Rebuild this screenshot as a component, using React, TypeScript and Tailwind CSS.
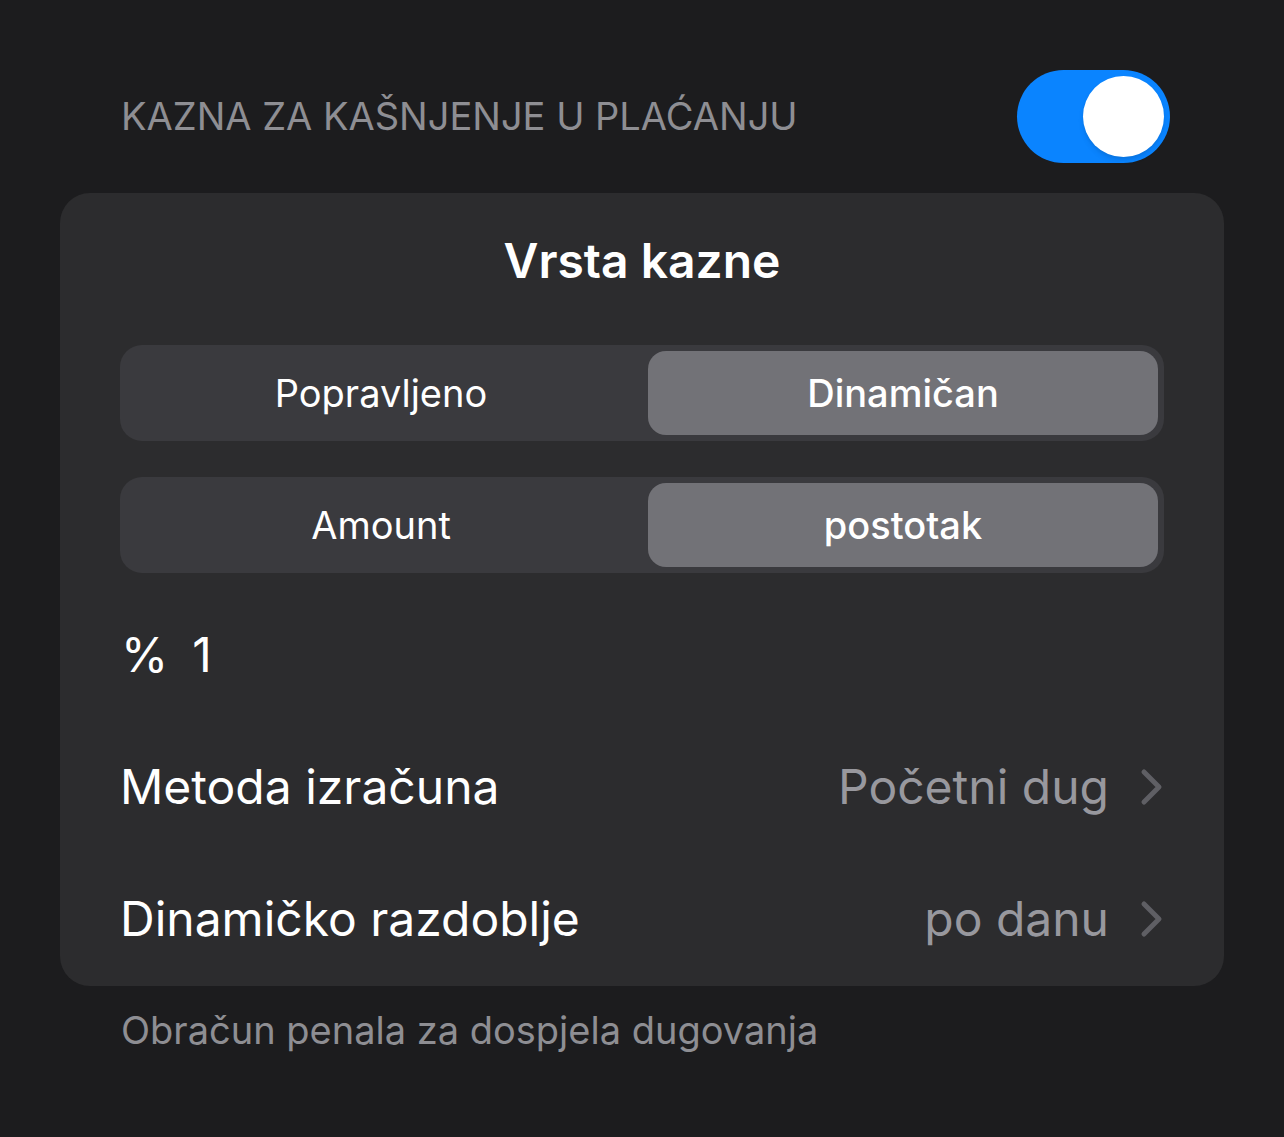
import React, { useState } from 'react';

const ChevronRight = () => (
  <svg width="24" height="38" viewBox="0 0 24 38" fill="none" className="shrink-0">
    <path d="M4 4 L19 19 L4 34" stroke="#5f5f64" strokeWidth="5" strokeLinecap="round" strokeLinejoin="round" />
  </svg>
);

const Segmented = ({ options, value, onChange }: { options: string[]; value: number; onChange: (i: number) => void }) => (
  <div className="grid grid-cols-2 gap-[12px] h-[96px] rounded-[22px] bg-[#3a3a3e] p-[6px]">
    {options.map((o, i) => (
      <button
        key={o}
        onClick={() => onChange(i)}
        className={
          i === value
            ? 'rounded-[18px] bg-[#727277] text-white text-[38px] font-medium'
            : 'rounded-[18px] text-white text-[38px] font-normal'
        }
      >
        {o}
      </button>
    ))}
  </div>
);

const Row = ({ label, value }: { label: string; value: string }) => (
  <div className="flex items-center justify-between h-[132px]">
    <span className="text-[48px] text-white">{label}</span>
    <div className="flex items-center gap-[31px]">
      <span className="text-[48px] text-[#98989e]">{value}</span>
      <ChevronRight />
    </div>
  </div>
);

export default function App() {
  const [enabled, setEnabled] = useState(true);
  const [kind, setKind] = useState(1);
  const [unit, setUnit] = useState(1);

  return (
    <div className="min-h-[1137px] bg-[#1c1c1e] px-[60px] pt-[70px] font-['Inter',sans-serif]">
      <div className="flex items-center justify-between pl-[61px] pr-[54px]">
        <span className="text-[38px] text-[#8e8e93]">KAZNA ZA KAŠNJENJE U PLAĆANJU</span>
        <button
          onClick={() => setEnabled(!enabled)}
          className={
            enabled
              ? 'w-[153px] h-[93px] rounded-full bg-[#0a84ff] flex items-center justify-end px-[6px]'
              : 'w-[153px] h-[93px] rounded-full bg-[#39393d] flex items-center justify-start px-[6px]'
          }
        >
          <span className="w-[81px] h-[81px] rounded-full bg-white shadow-md" />
        </button>
      </div>

      <div className="mt-[30px] rounded-[30px] bg-[#2c2c2e] px-[60px] pt-[37px] pb-px">
        <div className="text-center text-[48px] font-semibold text-white leading-[61px]">Vrsta kazne</div>
        <div className="mt-[54px] flex flex-col gap-[36px]">
          <Segmented options={['Popravljeno', 'Dinamičan']} value={kind} onChange={setKind} />
          <Segmented options={['Amount', 'postotak']} value={unit} onChange={setUnit} />
        </div>
        <div className="mt-[16px] flex items-center h-[132px] text-[48px] text-white">
          <span className="ml-px">%</span>
          <span className="ml-[24px]">1</span>
        </div>
        <Row label="Metoda izračuna" value="Početni dug" />
        <Row label="Dinamičko razdoblje" value="po danu" />
      </div>

      <div className="pl-[61px] mt-[16px] text-[38px] text-[#8e8e93]">Obračun penala za dospjela dugovanja</div>
    </div>
  );
}
